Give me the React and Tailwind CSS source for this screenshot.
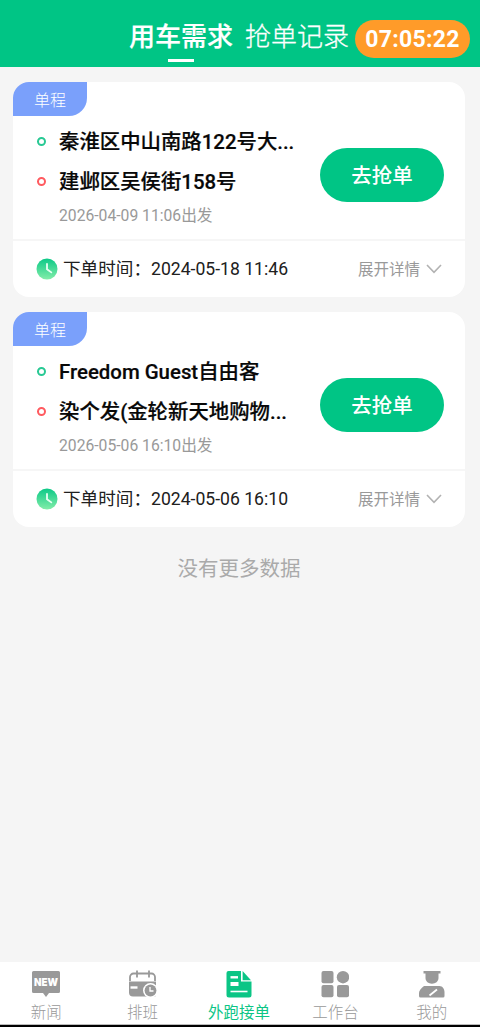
import React from 'react'

const orders = [
  {
    type: '单程',
    from: '秦淮区中山南路122号大...',
    to: '建邺区吴侯街158号',
    departure: '2026-04-09 11:06出发',
    date: '2024-05-18',
    time: '11:46'
  },
  {
    type: '单程',
    from: 'Freedom Guest自由客',
    to: '染个发(金轮新天地购物...',
    departure: '2026-05-06 16:10出发',
    date: '2024-05-06',
    time: '16:10'
  }
]

const ClockIcon = () => (
  <svg className="w-[22px] h-[22px] shrink-0" viewBox="0 0 22 22" fill="none">
    <defs>
      <linearGradient id="clockFill" x1="0" y1="0" x2="0" y2="1">
        <stop offset="0" stopColor="#0cc987" />
        <stop offset="1" stopColor="#83eda9" />
      </linearGradient>
    </defs>
    <circle cx="11" cy="11" r="10.5" fill="url(#clockFill)" />
    <path d="M11 6v5.2l4.3 3.2" stroke="#e9fff4" strokeWidth="1.8" strokeLinecap="round" strokeLinejoin="round" />
  </svg>
)

const ChevronIcon = () => (
  <svg className="w-4 h-[10px] shrink-0" viewBox="0 0 16 10" fill="none" stroke="#b2b2b2" strokeWidth="1.6">
    <path d="M1 1l7 7.3L15 1" />
  </svg>
)

const NewsIcon = () => (
  <svg className="w-7 h-7" viewBox="0 0 28 28">
    <path d="M1.5 1h25a1.5 1.5 0 0 1 1.5 1.5v19a1.5 1.5 0 0 1-1.5 1.5H17l-3 4-3-4H1.5A1.5 1.5 0 0 1 0 21.5v-19A1.5 1.5 0 0 1 1.5 1z" fill="#999" />
    <text x="2" y="16.4" textLength="24" lengthAdjust="spacingAndGlyphs" fill="#fff" className="font-['Inter','Liberation_Sans',sans-serif] text-[10.5px] font-black">NEW</text>
  </svg>
)

const ScheduleIcon = () => (
  <svg className="w-7 h-7" viewBox="0 0 28 28" fill="none">
    <path d="M1 11V7a3.5 3.5 0 0 1 3.5-3.500h18A3.500 3.500 0 0 1 26 7v4M8 .5v7M20 .5v7" stroke="#999" strokeWidth="1.800" />
    <path d="M0 11.500h27V25a1.500 1.500 0 0 1-1.500 1.500H4a4 4 0 0 1-4-4z" fill="#999" />
    <path d="M1.500 17.500h7" stroke="#fff" strokeWidth="2.400" />
    <circle cx="21.500" cy="20.500" r="7.500" fill="#fff" />
    <circle cx="21.500" cy="20.500" r="5.900" fill="#999" />
    <path d="M21 17v4h3.500" stroke="#fff" strokeWidth="1.300" />
  </svg>
)

const OrdersIcon = () => (
  <svg className="w-7 h-7" viewBox="0 0 28 28" fill="none">
    <path d="M3.500 1H16v10.500h10.500V25a2.500 2.500 0 0 1-2.500 2.500H4A2.500 2.500 0 0 1 1.500 25V3a2 2 0 0 1 2-2z" fill="#0bc585" />
    <path d="M17.600 1l8.400 9.200h-8.400z" fill="#0bc585" />
    <path d="M5.500 7.300h7.500" stroke="#fff" strokeWidth="2.400" />
    <path d="M5.500 21.500h17" stroke="#fff" strokeWidth="1.600" />
    <path d="M5.500 12h8v4h-8z" fill="#fff" />
  </svg>
)

const WorkbenchIcon = () => (
  <svg className="w-7 h-7" viewBox="0 0 28 28" fill="#999">
    <rect x="0.500" y="1" width="12" height="12.300" rx="2" />
    <circle cx="22" cy="7.200" r="6.200" />
    <rect x="0.500" y="15" width="12" height="12.300" rx="2" />
    <rect x="16" y="15" width="12" height="12.300" rx="2" />
  </svg>
)

const ProfileIcon = () => (
  <svg className="w-7 h-7" viewBox="0 0 28 28" fill="#999">
    <path d="M5.500 1h17v2.500h-2V8c0 3.500-3 5.700-6.500 5.700S7.500 11.500 7.500 8V3.500h-2z" />
    <path d="M6 16h15.500c3 0 5 3 5 6v4a1.500 1.500 0 0 1-1.500 1.500H2.500A1.500 1.500 0 0 1 1 26v-3c0-2 2-5 5-7z" />
    <path d="M11.500 25.500l7.500-6" stroke="#fff" strokeWidth="1.800" />
  </svg>
)

const tabs = [
  { label: '新闻', Icon: NewsIcon },
  { label: '排班', Icon: ScheduleIcon },
  { label: '外跑接单', Icon: OrdersIcon, active: true },
  { label: '工作台', Icon: WorkbenchIcon },
  { label: '我的', Icon: ProfileIcon }
]

const Header = () => (
  <header className="h-[67px] shrink-0 bg-[#00c585] flex items-start justify-end pr-[10px] text-white">
    <div className="flex flex-col items-center pt-[19px]">
      <h1 className="text-[26px] leading-9 font-medium [-webkit-text-stroke:0.2px_white]">用车需求</h1>
      <div className="w-[26px] h-[3px] mt-1 bg-white" />
    </div>
    <div className="ml-3 pt-[19px] text-[26px] leading-9 font-light [-webkit-text-stroke:0.3px_white]">抢单记录</div>
    <div className="ml-[6px] mt-5 w-[115px] h-[38px] rounded-full bg-[#ff9b29] flex items-center justify-center pt-[2px] text-[23px] font-bold tracking-[0.3px]">
      07:05:22
    </div>
  </header>
)

const Place = ({ name, dot }) => (
  <div className="h-10 flex items-center">
    <span className={`w-[9px] h-[9px] ml-6 mr-[13px] rounded-full border-2 ${dot}`} />
    <span className="pt-[2px] text-[20.4px] leading-none font-medium whitespace-nowrap [-webkit-text-stroke:0.2px_#080808]">{name}</span>
  </div>
)

const OrderCard = ({ order }) => (
  <section className="h-[215px] bg-white rounded-2xl overflow-hidden text-[#080808]">
    <div className="h-[159px] border-b-2 border-[#f6f6f6]">
      <div className="w-[74px] h-[34px] rounded-br-[18px] bg-[#7aa0fb] text-white text-base font-light flex items-center justify-center pt-[3px]">
        {order.type}
      </div>
      <div className="flex justify-between pt-[5px]">
        <div>
          <Place name={order.from} dot="border-[#29c994]" />
          <Place name={order.to} dot="border-[#ff5b60]" />
          <p className="ml-[46px] text-[15.7px] leading-[30px] text-[#999]">{order.departure}</p>
        </div>
        <button className="w-[124px] h-[54px] mt-[27px] mr-[21px] pt-[2px] shrink-0 rounded-full bg-[#00c585] text-white text-[20.5px] font-medium">
          去抢单
        </button>
      </div>
    </div>
    <div className="h-14 flex items-center pl-[23px] pr-[23px]">
      <ClockIcon />
      <div className="ml-[5px] pt-px text-[17.6px] whitespace-nowrap flex text-[#202020]">
        <span className="w-[88px] shrink-0">下单时间：</span>
        <span>{order.date} {order.time}</span>
      </div>
      <button className="ml-auto flex items-center gap-[6px] text-[15.5px] text-[#999]">
        <span className="pt-[3px]">展开详情</span>
        <ChevronIcon />
      </button>
    </div>
  </section>
)

const TabBar = () => (
  <nav className="h-[65px] shrink-0 bg-white border-b-2 border-black flex -ml-[2px]">
    {tabs.map(({ label, Icon, active }) => (
      <button key={label} className={`flex-1 flex flex-col items-center pt-2 border-b border-[#bbb] ${active ? 'text-[#0bc585]' : 'font-light text-[#999]'}`}>
        <Icon />
        <span className="text-[15.5px] leading-[22px] mt-1">{label}</span>
      </button>
    ))}
  </nav>
)

export default function App() {
  return (
    <div className="w-full h-screen flex flex-col overflow-hidden bg-[#f5f5f5] font-['Roboto','Noto_Sans_CJK_SC',sans-serif]">
      <Header />
      <main className="flex-1 pl-[13px] pr-[15px] pt-[15px] flex flex-col gap-[15px]">
        {orders.map((order) => (
          <OrderCard key={order.departure} order={order} />
        ))}
        <p className="text-center text-[20.5px] leading-[30px] mt-3 text-[#aaa]">没有更多数据</p>
      </main>
      <TabBar />
    </div>
  )
}
